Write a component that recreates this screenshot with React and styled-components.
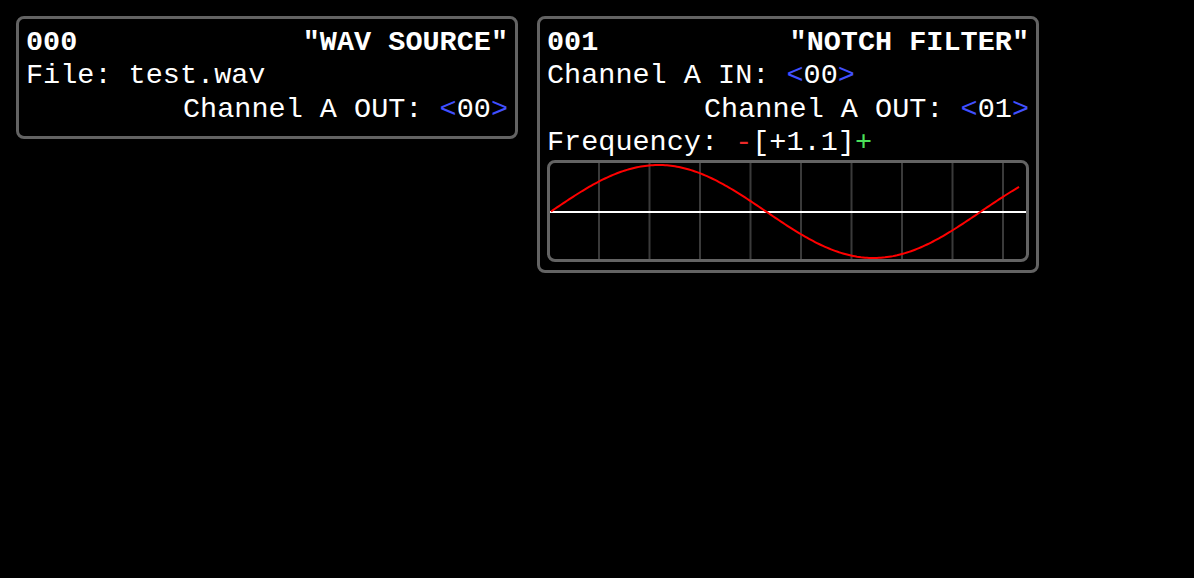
import React from "react";
import styled, { createGlobalStyle } from "styled-components";

const GlobalStyle = createGlobalStyle`
  html, body {
    margin: 0;
    padding: 0;
    background: #000;
  }
  body {
    font-family: "Liberation Mono", "Courier New", monospace;
    color: #fff;
  }
`;

const Rack = styled.div`
  display: flex;
  align-items: flex-start;
  gap: 19px;
  padding: 16px;
`;

const Panel = styled.div`
  width: 482px;
  border: 3px solid #636363;
  border-radius: 8px;
  padding: 7px 7px ${(p) => p.$padBottom || 8}px 7px;
  font-size: 28.5px;
  line-height: 33.3px;
  white-space: pre;
`;

const TitleRow = styled.div`
  display: flex;
  justify-content: space-between;
  font-weight: bold;
`;

const Line = styled.div`
  display: flex;
  justify-content: ${(p) => (p.$right ? "flex-end" : "flex-start")};
`;

const Colored = styled.span`
  color: ${(p) => p.$color};
`;

const Scope = styled.div`
  margin-top: 1px;
  height: 96px;
  border: 3px solid #636363;
  border-radius: 8px;
  overflow: hidden;
  display: flex;
`;

const ScopeSvg = styled.svg`
  display: block;
  width: 100%;
  height: 100%;
`;

const Port = ({ value }) => (
  <>
    <Colored $color="#4150ff">&lt;</Colored>
    {value}
    <Colored $color="#4150ff">&gt;</Colored>
  </>
);

function sinePath() {
  const pts = [];
  for (let x = 1; x <= 469; x += 2) {
    const y = 48.5 - 46.5 * Math.sin((2 * Math.PI * (x - 1)) / 430);
    pts.push(`${x},${y.toFixed(2)}`);
  }
  return "M" + pts.join(" L");
}

const Graph = () => {
  const grid = [];
  for (let i = 0; i < 9; i++) grid.push(49 + 50.5 * i);
  return (
    <Scope>
      <ScopeSvg viewBox="0 0 476 96" preserveAspectRatio="none">
        {grid.map((x) => (
          <line key={x} x1={x} y1={0} x2={x} y2={96} stroke="#3a3a3a" strokeWidth="2" />
        ))}
        <line x1={0} y1={49} x2={476} y2={49} stroke="#fff" strokeWidth="2" />
        <path d={sinePath()} fill="none" stroke="#f00" strokeWidth="2" />
      </ScopeSvg>
    </Scope>
  );
};

export default function App() {
  return (
    <>
      <GlobalStyle />
      <Rack>
        <Panel $padBottom={10}>
          <TitleRow>
            <span>000</span>
            <span>"WAV SOURCE"</span>
          </TitleRow>
          <Line>File: test.wav</Line>
          <Line $right>
            <span>
              Channel A OUT: <Port value="00" />
            </span>
          </Line>
        </Panel>
        <Panel>
          <TitleRow>
            <span>001</span>
            <span>"NOTCH FILTER"</span>
          </TitleRow>
          <Line>
            <span>
              Channel A IN: <Port value="00" />
            </span>
          </Line>
          <Line $right>
            <span>
              Channel A OUT: <Port value="01" />
            </span>
          </Line>
          <Line>
            <span>
              Frequency: <Colored $color="#ec2a2a">-</Colored>[+1.1]
              <Colored $color="#4be05a">+</Colored>
            </span>
          </Line>
          <Graph />
        </Panel>
      </Rack>
    </>
  );
}
